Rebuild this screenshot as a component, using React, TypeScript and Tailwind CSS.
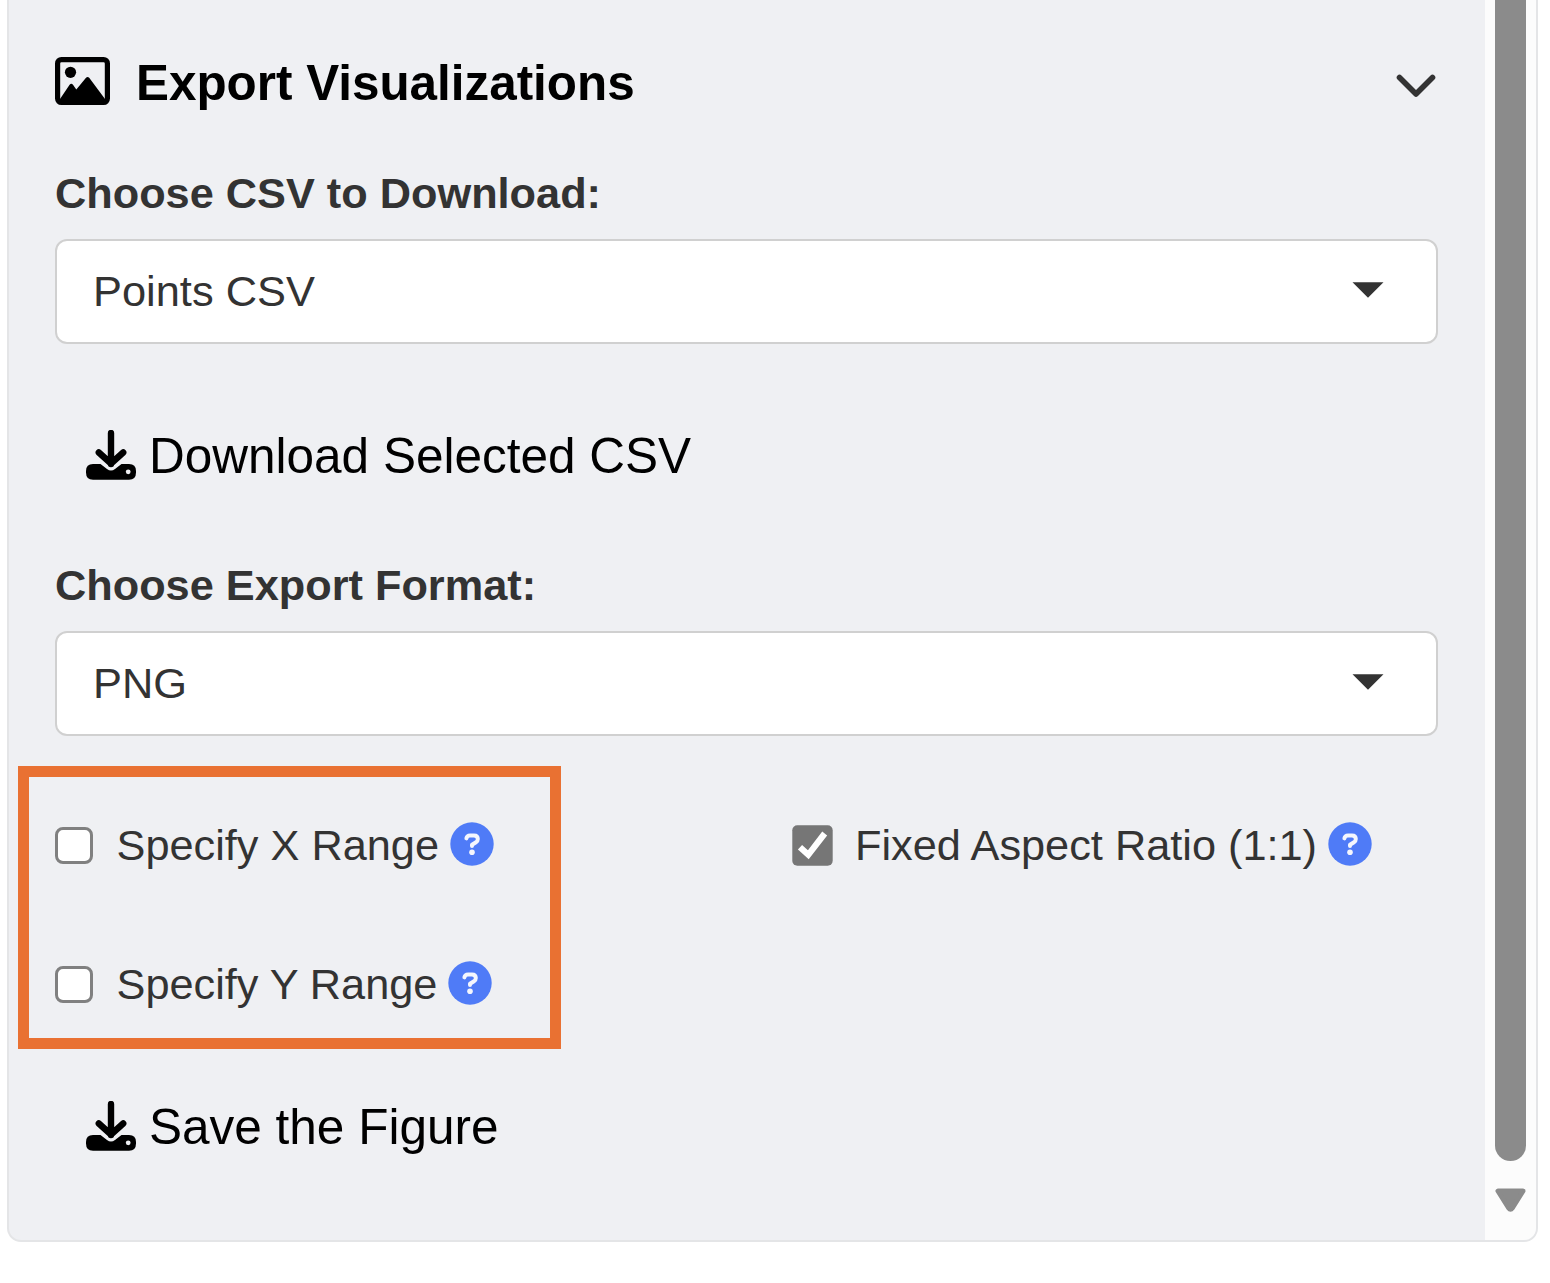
import React from "react";

function ImageIcon() {
  return (
    <svg className="h-12 w-[55px] shrink-0" viewBox="0 0 55 48" fill="none">
      <rect x="2.6" y="2.6" width="49.8" height="42.8" rx="3.8" stroke="#000" strokeWidth="5.2" />
      <circle cx="15.5" cy="15.3" r="5.6" fill="#000" />
      <path d="M5 42 14.6 27.8Q16.3 25.8 18 27.8L21.3 32.4 31 20.8Q32.6 19.2 34.2 20.8L50 42V45H5Z" fill="#000" />
    </svg>
  );
}

function DownloadIcon() {
  return (
    <svg className="size-[50px] shrink-0" viewBox="0 0 50 50" fill="none">
      <path
        d="M7 34H14.5L21 39Q25 42 29 39L35.5 34H43Q50 34 50 41V42.5Q50 49.8 43 49.8H7Q0 49.8 0 42.5V41Q0 34 7 34Z"
        fill="#000"
      />
      <circle cx="42.2" cy="41.8" r="2.4" fill="#eff0f3" />
      <path d="M25 3V34M12.8 22.5 25 33.5 37.2 22.5" stroke="#000" strokeWidth="6.4" strokeLinecap="round" strokeLinejoin="round" />
    </svg>
  );
}

function HelpIcon() {
  return (
    <svg className="mb-[3px] size-11 shrink-0" viewBox="0 0 44 44" fill="none">
      <circle cx="22" cy="22" r="21.7" fill="#4f7bf7" />
      <path
        d="M16.4 16.4Q17 13.4 20 13.4H24Q27.8 13.4 27.8 17Q27.8 19.2 26 20.3L22 22.8V24"
        stroke="#f4f6fd"
        strokeWidth="4"
        strokeLinecap="round"
        strokeLinejoin="round"
      />
      <circle cx="22" cy="30.2" r="2.8" fill="#f4f6fd" />
    </svg>
  );
}

function Label({ children }: { children: React.ReactNode }) {
  return <div className="flex h-[92px] items-center pt-px text-[43.3px] leading-none font-bold">{children}</div>;
}

function Select({ value }: { value: string }) {
  return (
    <div className="flex h-[105px] items-center justify-between rounded-[12px] border-2 border-[#d0d0d0] bg-white pr-[52px] pl-[36px] text-[43.4px] leading-none">
      <span>{value}</span>
      <svg className="mb-1 h-4 w-8" viewBox="0 0 32 16">
        <path d="M0.5 0.3H31.5L16 15.7Z" fill="#333" />
      </svg>
    </div>
  );
}

function Action({ children }: { children: React.ReactNode }) {
  return (
    <button className="flex h-[60px] items-center gap-[13px] pl-[31px] text-[49.5px] leading-none text-black">
      <DownloadIcon />
      <span className="mt-0.5">{children}</span>
    </button>
  );
}

function Check({ checked = false, children }: { checked?: boolean; children: React.ReactNode }) {
  return (
    <div className="flex h-[60px] items-center text-[43.3px] leading-none whitespace-nowrap">
      {checked ? (
        <svg className="mr-[22px] size-[41px]" viewBox="0 0 41 41" fill="none">
          <rect x="0.3" y="0.3" width="40.4" height="40.4" rx="5" fill="#767676" />
          <path d="M8 22.3 16.3 29.8 32.7 8.5" stroke="#fff" strokeWidth="6.2" />
        </svg>
      ) : (
        <span className="mt-px mr-[24px] size-[37.5px] rounded-[8px] border-[3px] border-[#808080] bg-white" />
      )}
      <span className="mt-0.5 mr-[11px]">{children}</span>
      <HelpIcon />
    </div>
  );
}

export default function App() {
  return (
    <div className="h-[1283px] w-[1550px] overflow-hidden bg-white pl-[7px] font-['Liberation_Sans',Arial,sans-serif] text-[#333]">
      <div className="flex h-[1242px] w-[1531px] overflow-hidden rounded-b-[14px] border-2 border-t-0 border-[#e4e5e7] bg-[#eff0f3]">
        <main className="flex w-[1476px] flex-col pr-[47px] pl-[46px]">
          <header className="mt-[50px] flex h-[62px] items-center text-[49.4px] leading-none font-bold text-black">
            <ImageIcon />
            <h2 className="mt-[3px] ml-[26px] grow">Export Visualizations</h2>
            <svg className="mt-[10px] mr-[2px] h-6 w-10" viewBox="0 0 40 24" fill="none">
              <path d="M3.5 3.5 20 20 36.5 3.5" stroke="#333" strokeWidth="5.6" strokeLinecap="round" strokeLinejoin="round" />
            </svg>
          </header>
          <div className="mt-[35px]">
            <Label>Choose CSV to Download:</Label>
            <Select value="Points CSV" />
          </div>
          <div className="mt-[81px]">
            <Action>Download Selected CSV</Action>
          </div>
          <div className="mt-[54px]">
            <Label>Choose Export Format:</Label>
            <Select value="PNG" />
          </div>
          <div className="relative mt-[79px] grid grid-cols-[737px_1fr] gap-y-[79px]">
            <Check>Specify X Range</Check>
            <Check checked>Fixed Aspect Ratio (1:1)</Check>
            <Check>Specify Y Range</Check>
            <div className="absolute top-[-49px] left-[-37px] h-[283px] w-[543px] border-[11px] border-[#e97132]" />
          </div>
          <div className="mt-[82px]">
            <Action>Save the Figure</Action>
          </div>
        </main>
        <aside className="flex grow flex-col items-center bg-[#fcfcfc]">
          <div className="h-[1161px] w-[31px] rounded-b-full bg-[#8b8b8b]" />
          <svg className="mt-[27px] h-[25px] w-[31px]" viewBox="0 0 32 25" preserveAspectRatio="none">
            <path d="M3 3H29L18 20Q16 22.5 14 20Z" fill="#8b8b8b" stroke="#8b8b8b" strokeWidth="5" strokeLinejoin="round" />
          </svg>
        </aside>
      </div>
    </div>
  );
}
